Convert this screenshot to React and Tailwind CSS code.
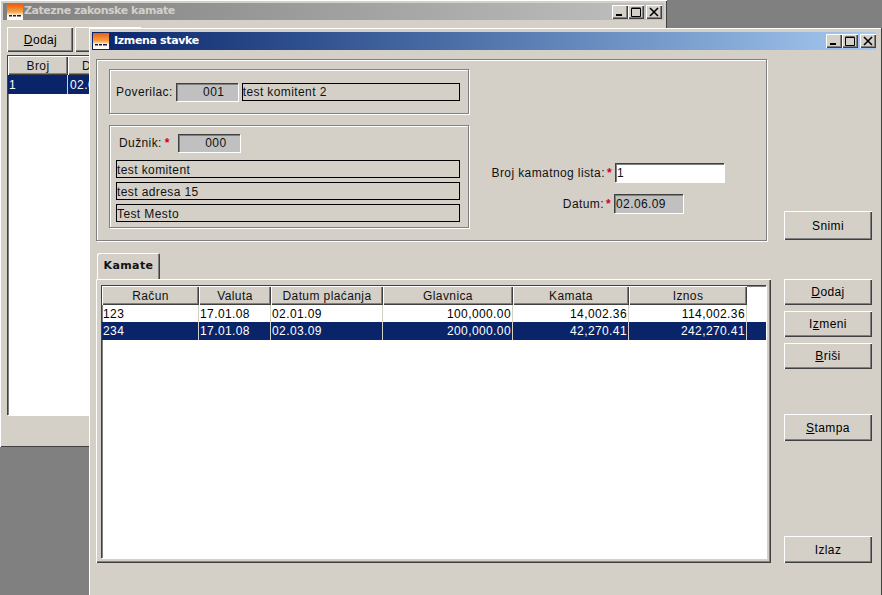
import React from "react";

const raised = "bg-[#d4d0c8] shadow-[inset_1px_1px_0_#ffffff,inset_-1px_-1px_0_#404040,inset_-2px_-2px_0_#808080]";
const etched = "border border-[#808080] shadow-[inset_1px_1px_0_#ffffff,1px_1px_0_#ffffff]";
const sunken = "shadow-[inset_1px_1px_0_#404040,inset_2px_2px_0_#808080,1px_1px_0_#ffffff]";

const rows = [
  ["123", "17.01.08", "02.01.09", "100,000.00", "14,002.36", "114,002.36"],
  ["234", "17.01.08", "02.03.09", "200,000.00", "42,270.41", "242,270.41"],
];

function Logo({ id }) {
  return (
    <svg width="16" height="16" viewBox="0 0 16 16" className="shrink-0">
      <defs>
        <linearGradient id={id} x1="0" y1="0" x2="0" y2="1">
          <stop offset="0" stopColor="#e8600c" />
          <stop offset="0.5" stopColor="#f9a24a" />
          <stop offset="0.7" stopColor="#fff4e0" />
          <stop offset="1" stopColor="#ffffff" />
        </linearGradient>
      </defs>
      <rect width="16" height="16" fill={`url(#${id})`} />
      <path d="M2 11h3v1.5H2zM6 11h3v1.5H6zM10 11h4v1.5h-4z" fill="#1a1a50" />
    </svg>
  );
}

function CaptionButtons() {
  return (
    <div className="flex items-center">
      <button className={`${raised} w-[16px] h-[14px] flex items-center justify-center`}>
        <svg width="10" height="10" viewBox="0 0 10 10"><rect x="1" y="7" width="6" height="2" fill="#000" /></svg>
      </button>
      <button className={`${raised} w-[16px] h-[14px] flex items-center justify-center`}>
        <svg width="10" height="10" viewBox="0 0 10 10"><path d="M0.5 1.5h9v8h-9z M0.5 1h9" fill="none" stroke="#000" /></svg>
      </button>
      <button className={`${raised} w-[16px] h-[14px] ml-[2px] flex items-center justify-center`}>
        <svg width="10" height="10" viewBox="0 0 10 10"><path d="M1 1l8 8M9 1l-8 8" stroke="#000" strokeWidth="1.6" /></svg>
      </button>
    </div>
  );
}

function Btn({ className = "", children }) {
  return (
    <button className={`${raised} flex items-center justify-center text-black ${className}`}>{children}</button>
  );
}

function Req({ className = "ml-[3px]" }) {
  return <span className={`text-[#d00020] font-bold ${className}`}>*</span>;
}

function Gray({ className = "", children }) {
  return <div className={`${sunken} bg-[#c0c0c0] flex items-center ${className}`}>{children}</div>;
}

function Line({ className = "", children }) {
  return <div className={`border border-black h-[18px] pt-px flex items-center leading-none ${className}`}>{children}</div>;
}

function BackWindow() {
  return (
    <div className="absolute left-0 top-0 w-[667px] h-[447px] bg-[#d4d0c8] shadow-[inset_1px_1px_0_#ffffff,inset_-1px_-1px_0_#404040] pt-[3px] px-[3px]">
      <div className="h-[17px] bg-gradient-to-r from-[#808080] to-[#c0c0c0] flex items-center justify-between pl-[4px] pr-[2px]">
        <div className="flex items-center">
          <Logo id="logoBack" />
          <span className="ml-px text-[#d4d0c8] font-bold text-[11px] font-['DejaVu_Sans',sans-serif] tracking-[-0.45px]">Zatezne zakonske kamate</span>
        </div>
        <CaptionButtons />
      </div>
      <div className="flex gap-[2px] mt-[7px] ml-[4px]">
        <Btn className="w-[66px] h-[25px] pl-px"><span><u>D</u>odaj</span></Btn>
        <Btn className="w-[66px] h-[25px]" />
      </div>
      <div className={`${sunken} bg-white mt-[3px] ml-[4px] mr-[4px] h-[360px] pl-px pt-px`}>
        <div className="flex">
          <div className={`${raised} w-[60px] h-[19px] flex items-center justify-center`}>Broj</div>
          <div className={`${raised} w-[80px] h-[19px] pl-[14px] flex items-center`}>Datum</div>
        </div>
        <div className="flex bg-[#0a246a] text-white h-[19px] items-center">
          <div className="w-[60px] pl-px border-r border-[#d4d0c8] h-full flex items-center">1</div>
          <div className="pl-[2px]">02.06.09</div>
        </div>
      </div>
    </div>
  );
}

function Debtor() {
  return (
    <div className={`${etched} mt-[11px] h-[103px] pl-[6px] pt-[8px]`}>
      <div className="flex items-center h-[18px] pl-[3px]">
        <span>Dužnik:</span>
        <Req />
        <Gray className="ml-[8px] w-[62px] h-[18px] justify-center pl-[14px]">000</Gray>
      </div>
      <div className="flex flex-col gap-[4px] mt-[8px] w-[344px]">
        <Line>test komitent</Line>
        <Line>test adresa 15</Line>
        <Line>Test Mesto</Line>
      </div>
    </div>
  );
}

function TopPanel() {
  return (
    <div className={`${etched} w-[671px] h-[182px] mt-[9px] flex pl-[12px] pt-[9px]`}>
      <div className="w-[360px] shrink-0">
        <div className={`${etched} h-[45px] flex items-center pl-[6px]`}>
          <span>Poverilac:</span>
          <Gray className="ml-[3px] w-[62px] h-[18px] justify-center pl-[14px]">001</Gray>
          <Line className="ml-[4px] w-[218px]">test komitent 2</Line>
        </div>
        <Debtor />
      </div>
      <div className="pt-[94px] w-[255px]">
        <div className="flex items-center h-[19px]">
          <div className="w-[146px] flex justify-end pr-[3px]">
            <span>Broj kamatnog lista:</span>
            <Req className="ml-[2px]" />
          </div>
          <div className={`${sunken} bg-white w-[109px] h-[19px] pl-[2px] flex items-center`}>1</div>
        </div>
        <div className="flex items-center h-[19px] mt-[12px]">
          <div className="w-[145px] flex justify-end pr-[3px]">
            <span>Datum:</span>
            <Req className="ml-[2px]" />
          </div>
          <Gray className="w-[69px] h-[19px] pl-[2px]">02.06.09</Gray>
        </div>
      </div>
    </div>
  );
}

function Grid() {
  const cols = "grid grid-cols-[97px_72px_112px_130px_116px_118px_1fr]";
  const heads = ["Račun", "Valuta", "Datum plaćanja", "Glavnica", "Kamata", "Iznos"];
  return (
    <div className={`${sunken} bg-white w-[665px] h-[273px] pl-px pt-px`}>
      <div className={cols}>
        {heads.map((h) => (
          <div key={h} className={`${raised} h-[19px] flex items-center justify-center`}>{h}</div>
        ))}
      </div>
      {rows.map((r, i) => (
        <div key={r[0]} className={`${cols} ${i === 1 ? "bg-[#0a246a] text-white h-[18px]" : "h-[17px] text-black"}`}>
          {r.map((c, j) => (
            <div key={j} className={`border-r border-[#d4d0c8] pl-px pr-px flex items-center ${j > 2 ? "justify-end" : ""}`}>{c}</div>
          ))}
        </div>
      ))}
    </div>
  );
}

function TabArea() {
  return (
    <div className="mt-[12px]">
      <div className="bg-[#d4d0c8] ml-px w-[63px] h-[26px] rounded-t-[2px] shadow-[inset_1px_1px_0_#ffffff,inset_-1px_0_0_#404040,inset_-2px_0_0_#808080] flex items-center justify-center font-bold font-['DejaVu_Sans',sans-serif] text-[11px] pt-px">
        Kamate
      </div>
      <div className="w-[675px] h-[284px] pl-[5px] pt-[6px] shadow-[inset_1px_1px_0_#ffffff,inset_-1px_-1px_0_#404040,inset_-2px_-2px_0_#808080]">
        <Grid />
      </div>
    </div>
  );
}

function FrontWindow() {
  return (
    <div className="absolute left-[89px] top-[28px] w-[792px] h-[567px] bg-[#d4d0c8] shadow-[inset_1px_1px_0_#ffffff,1px_0_0_#404040] pt-[4px] pl-[3px] pr-[5px]">
      <div className="h-[18px] bg-gradient-to-r from-[#0a246a] to-[#a6caf0] flex items-center justify-between pl-px pr-0">
        <div className="flex items-center">
          <Logo id="logoFront" />
          <span className="ml-[5px] text-white font-bold text-[11px] font-['DejaVu_Sans',sans-serif] tracking-[-0.35px]">Izmena stavke</span>
        </div>
        <CaptionButtons />
      </div>
      <div className="flex">
        <div className="ml-[4px] w-[675px] shrink-0">
          <TopPanel />
          <TabArea />
        </div>
        <div className="ml-[13px] w-[88px] flex flex-col">
          <Btn className="mt-[161px] h-[29px]">Snimi</Btn>
          <Btn className="mt-[39px] h-[26px]"><span><u>D</u>odaj</span></Btn>
          <Btn className="mt-[6px] h-[26px]"><span>I<u>z</u>meni</span></Btn>
          <Btn className="mt-[6px] h-[26px]"><span><u>B</u>riši</span></Btn>
          <Btn className="mt-[45px] h-[27px]"><span><u>S</u>tampa</span></Btn>
          <Btn className="mt-[95px] h-[27px]">Izlaz</Btn>
        </div>
      </div>
    </div>
  );
}

export default function App() {
  return (
    <div className="relative w-[882px] h-[595px] overflow-hidden bg-[#808080] text-[12px] tracking-[0.4px] text-[#111] font-['Liberation_Sans',Arial,sans-serif]">
      <BackWindow />
      <FrontWindow />
    </div>
  );
}
